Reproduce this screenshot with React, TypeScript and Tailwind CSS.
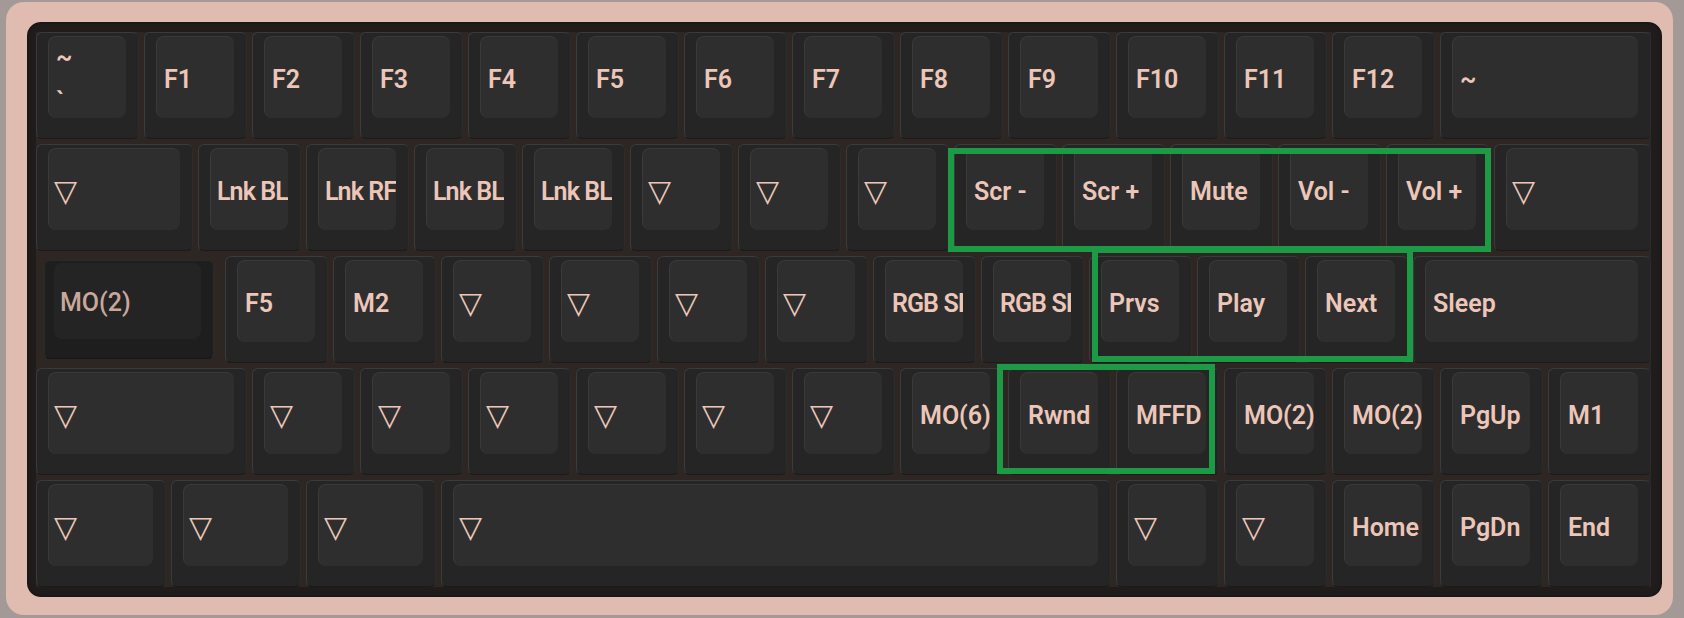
import React from "react";

type KeyDef = { l: string; w?: number; pressed?: boolean; lines?: string[] };

const U = 108;
const TRI = "▽";

const rows: KeyDef[][] = [
  [
    { l: "", lines: ["~", "`"] },
    { l: "F1" }, { l: "F2" }, { l: "F3" }, { l: "F4" }, { l: "F5" }, { l: "F6" },
    { l: "F7" }, { l: "F8" }, { l: "F9" }, { l: "F10" }, { l: "F11" }, { l: "F12" },
    { l: "~", w: 2 },
  ],
  [
    { l: TRI, w: 1.5 },
    { l: "Lnk BL" }, { l: "Lnk RF" }, { l: "Lnk BL" }, { l: "Lnk BL" },
    { l: TRI }, { l: TRI }, { l: TRI },
    { l: "Scr -" }, { l: "Scr +" }, { l: "Mute" }, { l: "Vol -" }, { l: "Vol +" },
    { l: TRI, w: 1.5 },
  ],
  [
    { l: "MO(2)", w: 1.75, pressed: true },
    { l: "F5" }, { l: "M2" },
    { l: TRI }, { l: TRI }, { l: TRI }, { l: TRI },
    { l: "RGB SI" }, { l: "RGB SI" },
    { l: "Prvs" }, { l: "Play" }, { l: "Next" },
    { l: "Sleep", w: 2.25 },
  ],
  [
    { l: TRI, w: 2 },
    { l: TRI }, { l: TRI }, { l: TRI }, { l: TRI }, { l: TRI }, { l: TRI },
    { l: "MO(6)" }, { l: "Rwnd" }, { l: "MFFD" }, { l: "MO(2)" }, { l: "MO(2)" },
    { l: "PgUp" }, { l: "M1" },
  ],
  [
    { l: TRI, w: 1.25 }, { l: TRI, w: 1.25 }, { l: TRI, w: 1.25 },
    { l: TRI, w: 6.25 },
    { l: TRI }, { l: TRI }, { l: "Home" }, { l: "PgDn" }, { l: "End" },
  ],
];

function Legend({ k }: { k: KeyDef }) {
  if (k.lines) {
    return (
      <div className="flex flex-col pl-[7px] pt-[6px] leading-[30px]">
        <span>{k.lines[0]}</span>
        <span className="mt-[14px]">{k.lines[1]}</span>
      </div>
    );
  }
  if (k.l === TRI) {
    return (
      <div className="flex h-full items-center pl-[5px] pt-[3px]">
        <span className="font-['DejaVu_Sans',sans-serif] text-[30px] font-normal leading-none">{TRI}</span>
      </div>
    );
  }
  const long = k.l.length >= 6;
  return (
    <div
      className={
        long
          ? "flex h-full items-center whitespace-nowrap pl-[6px] pt-[5px] tracking-[-0.9px]"
          : "flex h-full items-center whitespace-nowrap pl-[7px] pt-[5px]"
      }
    >
      {k.l}
    </div>
  );
}

function Key({ k }: { k: KeyDef }) {
  const width = (k.w ?? 1) * U - 5;
  if (k.pressed) {
    return (
      <div style={{ width }} className="h-[107px] shrink-0 py-[4px] pl-[8px] pr-[6px]">
        <div className="h-full rounded-[6px] border border-[#2a2a2a] border-b-[#161616] bg-[#1e1e1e] pb-[19px] pl-[9px] pr-[12px] pt-[2px]">
          <div className="h-full overflow-hidden rounded-[8px] bg-[#242424] font-medium text-[#c8a89d]">
            <div className="flex h-full items-center whitespace-nowrap pl-[6px] pt-[3px]">{k.l}</div>
          </div>
        </div>
      </div>
    );
  }
  return (
    <div
      style={{ width }}
      className="h-[107px] shrink-0 rounded-[6px] border border-[#3b3b3b] border-b-[#1a1a1a] border-r-[#2c2c2c] bg-[#252525] pb-[20px] pl-[11px] pr-[12px] pt-[3px]"
    >
      <div className="h-full overflow-hidden rounded-[8px] border-l border-t border-[#3a3a3a] bg-[#2e2e2e]">
        <Legend k={k} />
      </div>
    </div>
  );
}

export default function App() {
  return (
    <div className="relative h-[618px] w-[1684px] bg-[#a39a97] pb-[3px] pl-[6px] pr-[11px] pt-[2px] font-['Roboto',sans-serif] text-[25px] font-semibold text-[#ebc6b9]">
      <div className="h-full rounded-[18px] bg-[#e0bbb0] pb-[18px] pl-[21px] pr-[11px] pt-[20px]">
        <div className="h-full rounded-[14px] border-[2px] border-[#1a1817] bg-[#201c1b] pb-[8px] pl-[7px] pr-[9px] pt-[8px] shadow-[inset_0_0_0_4px_#1e1b1a]">
          <div className="flex w-[1615px] flex-col gap-[5px] bg-[#2e2623]">
            {rows.map((r, i) => (
              <div key={i} className="flex gap-[5px]">
                {r.map((k, j) => (
                  <Key key={j} k={k} />
                ))}
              </div>
            ))}
          </div>
        </div>
      </div>

      {/* highlighted key groups */}
      <div className="absolute left-[948px] top-[148px] h-[104px] w-[543px] border-[6px] border-[#1d9a46]" />
      <div className="absolute left-[1092px] top-[247px] h-[115px] w-[321px] border-[6px] border-[#1d9a46]" />
      <div className="absolute left-[997px] top-[364px] h-[110px] w-[218px] border-[6px] border-[#1d9a46]" />
    </div>
  );
}
